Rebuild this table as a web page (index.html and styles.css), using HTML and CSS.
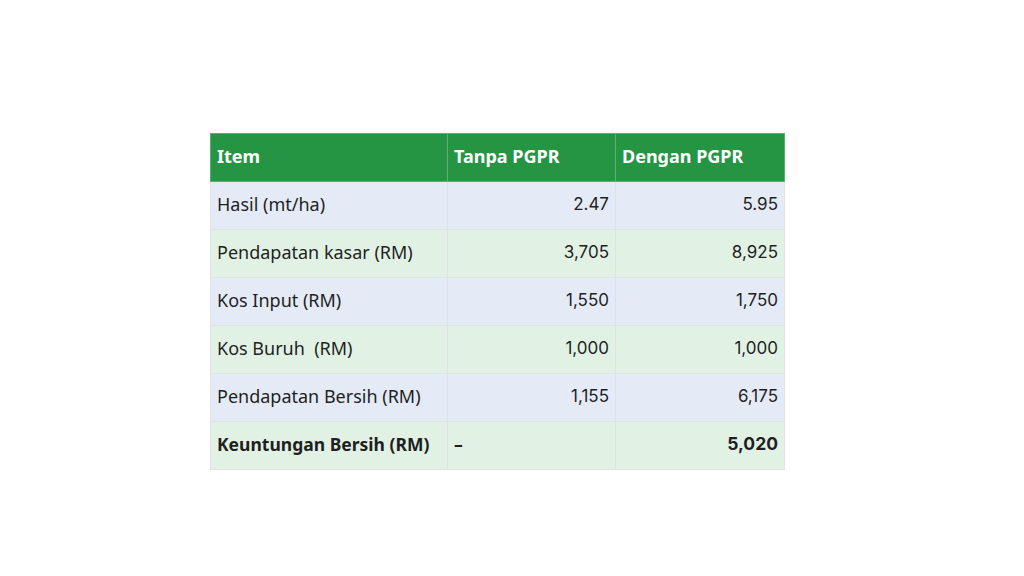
FILE: index.html
```html
<!DOCTYPE html>
<html lang="ms">
<head>
  <meta charset="UTF-8" />
  <title>Perbandingan PGPR</title>
  <link rel="stylesheet" href="styles.css">
</head>
<body>
  <div class="page">
    <table class="compare">
      <thead>
        <tr>
          <th class="col-item">Item</th>
          <th class="col-a">Tanpa PGPR</th>
          <th class="col-b">Dengan PGPR</th>
        </tr>
      </thead>
      <tbody>
        <tr class="blue">
          <td>Hasil (mt/ha)</td>
          <td class="num">2.47</td>
          <td class="num">5.95</td>
        </tr>
        <tr class="green">
          <td>Pendapatan kasar (RM)</td>
          <td class="num">3,705</td>
          <td class="num">8,925</td>
        </tr>
        <tr class="blue">
          <td>Kos Input (RM)</td>
          <td class="num">1,550</td>
          <td class="num">1,750</td>
        </tr>
        <tr class="green">
          <td>Kos Buruh&nbsp; (RM)</td>
          <td class="num">1,000</td>
          <td class="num">1,000</td>
        </tr>
        <tr class="blue">
          <td>Pendapatan Bersih (RM)</td>
          <td class="num">1,155</td>
          <td class="num">6,175</td>
        </tr>
        <tr class="green total">
          <td>Keuntungan Bersih (RM)</td>
          <td class="dash">–</td>
          <td class="num">5,020</td>
        </tr>
      </tbody>
    </table>
  </div>
</body>
</html>
```

FILE: styles.css
```css
body {
  margin: 0;
  background-color: #fff;
  font-family: "Noto Sans", "Open Sans", sans-serif;
  color: #1f1f1f;
}

.page {
  padding-top: 133px;
  padding-left: 210px;
}

.compare {
  border-collapse: collapse;
  width: 575px;
  font-size: 18px;
}

.compare th,
.compare td {
  height: 43px;
  padding: 0 6px 4px;
  border: 1px solid #dfe3e6;
  text-align: left;
  vertical-align: middle;
}

.compare th {
  background-color: #259544;
  color: #fff;
  font-weight: bold;
  border-color: #56b06f;
}

.col-item {
  width: 224px;
}

.col-a {
  width: 155px;
}

.compare tr.blue td {
  background-color: #e4ebf7;
}

.compare tr.green td {
  background-color: #e1f2e5;
}

.compare td.num {
  text-align: right;
  font-family: Inter, "Noto Sans", sans-serif;
  font-size: 17px;
}

.compare tr.total td {
  font-weight: bold;
  font-size: 17.5px;
}

.compare td.dash {
  font-weight: normal;
}
```
